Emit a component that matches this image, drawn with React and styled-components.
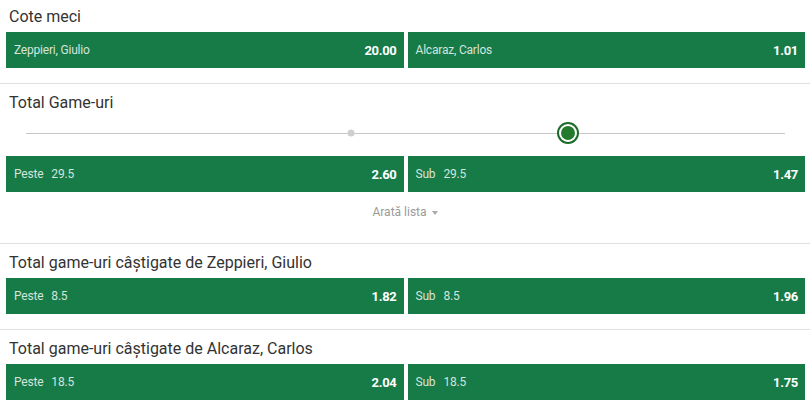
import React from 'react';
import styled, { createGlobalStyle } from 'styled-components';

const markets = [
  {
    title: 'Total game-uri câștigate de Zeppieri, Giulio',
    odds: [
      { label: 'Peste', line: '8.5', price: '1.82' },
      { label: 'Sub', line: '8.5', price: '1.96' },
    ],
  },
  {
    title: 'Total game-uri câștigate de Alcaraz, Carlos',
    odds: [
      { label: 'Peste', line: '18.5', price: '2.04' },
      { label: 'Sub', line: '18.5', price: '1.75' },
    ],
  },
];

const OddButton = ({ label, line, price }) => (
  <Odd>
    <Label>
      {label}
      {line && <Line>{line}</Line>}
    </Label>
    <Price>{price}</Price>
  </Odd>
);

const App = () => {
  return (
    <>
      <GlobalStyle />
      <Page>
        <Section>
          <Title>Cote meci</Title>
          <Row>
            <OddButton label="Zeppieri, Giulio" price="20.00" />
            <OddButton label="Alcaraz, Carlos" price="1.01" />
          </Row>
        </Section>

        <Section $tight>
          <Title>Total Game-uri</Title>
          <Slider>
            <Track>
              <Stop style={{ left: '42.8%' }} />
              <Thumb style={{ left: '71.4%' }} />
            </Track>
          </Slider>
          <Row>
            <OddButton label="Peste" line="29.5" price="2.60" />
            <OddButton label="Sub" line="29.5" price="1.47" />
          </Row>
          <ShowMore>
            Arată lista
            <svg width="6" height="4" viewBox="0 0 6 4">
              <path d="M0 0h6L3 4z" fill="#aaa" />
            </svg>
          </ShowMore>
        </Section>

        {markets.map((m) => (
          <Section key={m.title}>
            <Title>{m.title}</Title>
            <Row>
              {m.odds.map((o) => (
                <OddButton key={o.label} {...o} />
              ))}
            </Row>
          </Section>
        ))}
      </Page>
    </>
  );
};

const GlobalStyle = createGlobalStyle`
  body {
    margin: 0;
    background: #fff;
    font-family: Roboto, "Liberation Sans", Arial, sans-serif;
    overflow: hidden;
  }
`;

const Page = styled.div`
  width: 810px;
  margin-top: -2px;
`;

const Section = styled.div`
  padding-bottom: ${(p) => (p.$tight ? '0' : '15px')};
  border-bottom: 1px solid #e0e0e0;
  &:last-child {
    border-bottom: none;
  }
`;

const Title = styled.div`
  padding: 9px 9px 0;
  height: 29px;
  box-sizing: border-box;
  font-size: 16px;
  line-height: 20px;
  color: #333;
  margin-bottom: 5px;
`;

const Row = styled.div`
  display: grid;
  grid-template-columns: 1fr 1fr;
  gap: 4px;
  padding: 0 5px 0 6px;
`;

const Odd = styled.div`
  display: flex;
  align-items: center;
  justify-content: space-between;
  height: 36px;
  padding: 0 7px 0 8px;
  background: #177b48;
  color: #fff;
`;

const Label = styled.span`
  font-size: 12px;
  letter-spacing: -0.2px;
  color: rgba(255, 255, 255, 0.82);
`;

const Line = styled.span`
  margin-left: 8px;
`;

const Price = styled.span`
  font-size: 13px;
  font-weight: 700;
  letter-spacing: -0.3px;
`;

const Slider = styled.div`
  height: 43px;
  margin-top: -5px;
  padding: 0 25px 2px 26px;
  display: flex;
  align-items: center;
  box-sizing: border-box;
`;

const Track = styled.div`
  position: relative;
  flex: 1;
  height: 1px;
  background: #c8c8c8;
`;

const Stop = styled.span`
  position: absolute;
  top: 0;
  width: 7px;
  height: 7px;
  border-radius: 50%;
  background: #cfcfcf;
  transform: translate(-50%, -50%);
`;

const Thumb = styled.span`
  position: absolute;
  top: 0;
  width: 14px;
  height: 14px;
  border-radius: 50%;
  background: #237a2c;
  border: 2px solid #fff;
  box-shadow: 0 0 0 2px #1d6b2a;
  transform: translate(-50%, -50%);
`;

const ShowMore = styled.div`
  height: 51px;
  display: flex;
  justify-content: center;
  align-items: flex-start;
  gap: 5px;
  padding-top: 13px;
  box-sizing: border-box;
  font-size: 12px;
  line-height: 14px;
  color: #9a9a9a;
  svg {
    margin-top: 6px;
  }
`;

export default App;
